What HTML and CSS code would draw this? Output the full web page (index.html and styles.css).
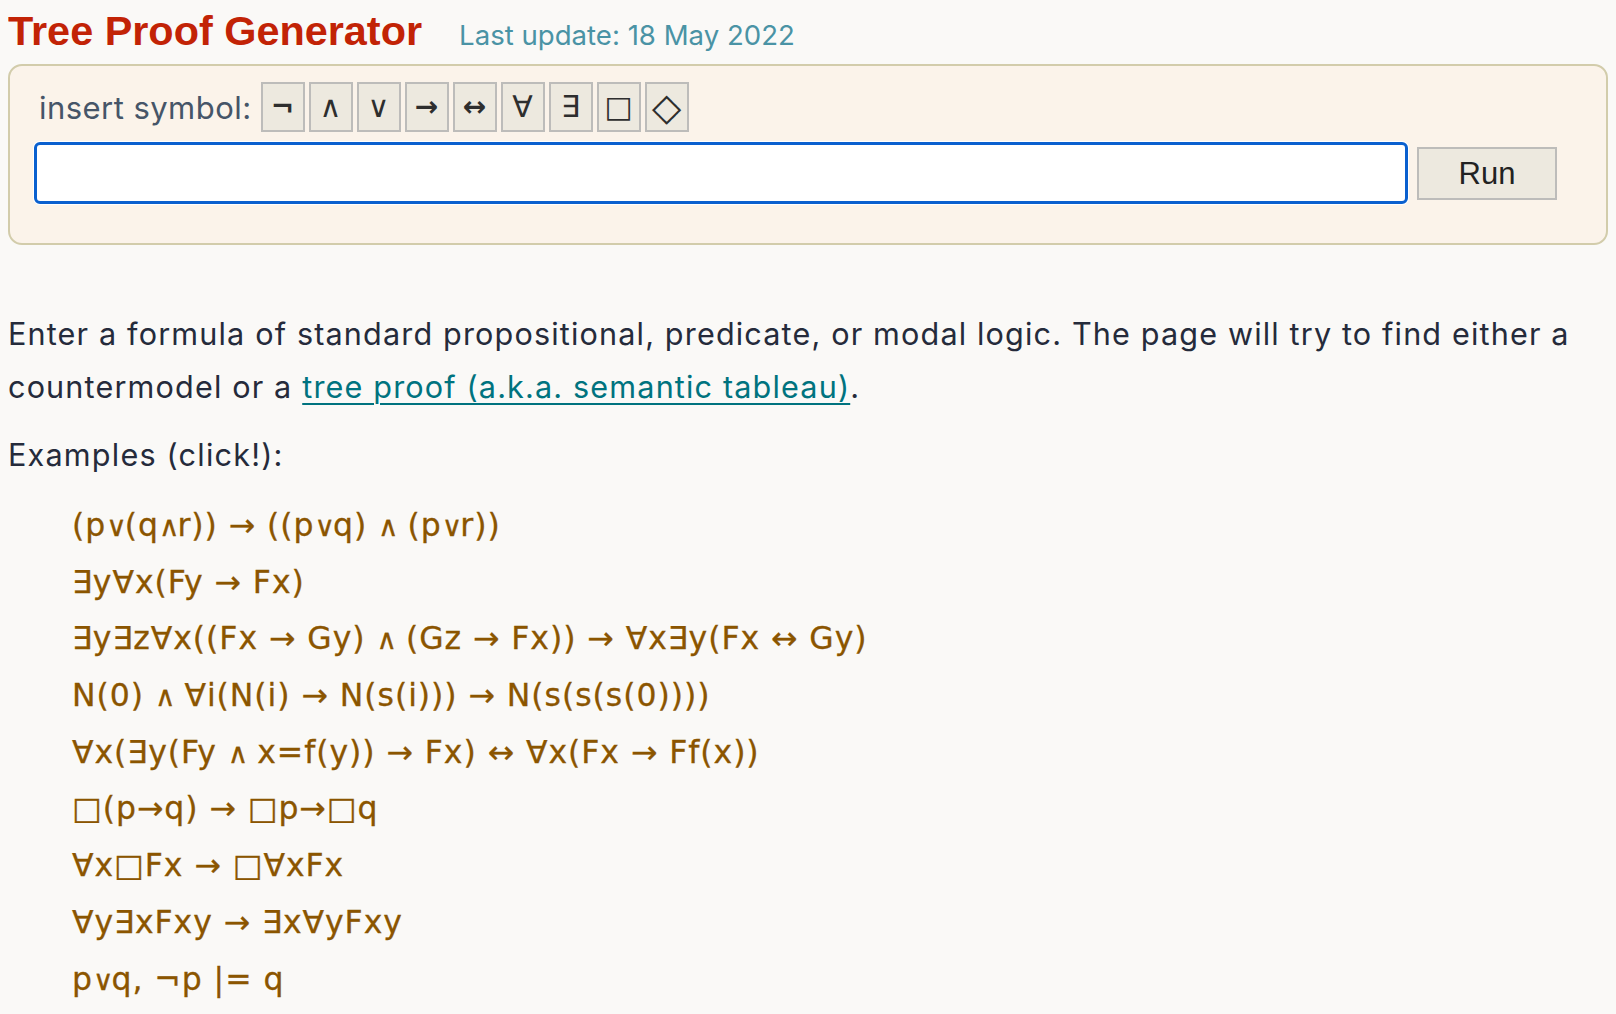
FILE: index.html
```html
<!DOCTYPE html>
<html lang="en">
<head>
<meta charset="utf-8">
<title>Tree Proof Generator</title>
<link rel="stylesheet" href="styles.css">
</head>
<body>
<header class="top">
  <h1 class="title">Tree Proof Generator</h1>
  <span class="updated">Last update: 18 May 2022</span>
</header>
<form class="panel">
  <div class="symbols">
    <span class="label">insert symbol:</span>
    <button type="button" class="sym sym-bold">¬</button>
    <button type="button" class="sym">∧</button>
    <button type="button" class="sym">∨</button>
    <button type="button" class="sym sym-bold">→</button>
    <button type="button" class="sym sym-bold">↔</button>
    <button type="button" class="sym">∀</button>
    <button type="button" class="sym">∃</button>
    <button type="button" class="sym sym-shape">□</button>
    <button type="button" class="sym sym-diamond">◇</button>
  </div>
  <div class="entry">
    <input class="formula" type="text" aria-label="formula">
    <button type="button" class="run">Run</button>
  </div>
</form>
<p class="intro">Enter a formula of standard propositional, predicate, or modal logic. The page will try to find either a countermodel or a <a href="#" class="link">tree proof (a.k.a. semantic tableau)</a>.</p>
<p class="ex-title">Examples (click!):</p>
<ul class="examples">
  <li>(p<span class="op">∨</span>(q<span class="op">∧</span>r)) → ((p<span class="op">∨</span>q) <span class="op">∧</span> (p<span class="op">∨</span>r))</li>
  <li>∃y∀x(Fy → Fx)</li>
  <li>∃y∃z∀x((Fx → Gy) <span class="op">∧</span> (Gz → Fx)) → ∀x∃y(Fx ↔ Gy)</li>
  <li>N(0) <span class="op">∧</span> ∀i(N(i) → N(s(i))) → N(s(s(s(0))))</li>
  <li>∀x(∃y(Fy <span class="op">∧</span> x=f(y)) → Fx) ↔ ∀x(Fx → Ff(x))</li>
  <li>□(p→q) → □p→□q</li>
  <li>∀x□Fx → □∀xFx</li>
  <li>∀y∃xFxy → ∃x∀yFxy</li>
  <li>p<span class="op">∨</span>q, ¬p |= q</li>
</ul>
</body>
</html>
```
FILE: styles.css
```css
html, body {
  background: #faf9f7;
}
body {
  margin: 8px;
  font-family: Inter, "Noto Sans", sans-serif;
  color: #252b3b;
}
.top {
  display: flex;
  align-items: baseline;
  gap: 37px;
}
.title {
  margin: 0;
  font-family: "Liberation Sans", Arial, sans-serif;
  font-weight: bold;
  font-size: 41.4px;
  line-height: 47px;
  color: #c22306;
}
.updated {
  font-family: Inter, sans-serif;
  font-size: 27.6px;
  color: #4a93a5;
}
.panel {
  margin-top: 9px;
  background: #fbf3ea;
  border: 2px solid #d2ccab;
  border-radius: 14px;
  padding: 16px 24px 39px 24px;
}
.symbols {
  display: flex;
  align-items: center;
  gap: 4px;
}
.label {
  margin-left: 5px;
  margin-right: 5px;
  font-size: 31px;
  letter-spacing: 0.45px;
  color: #465568;
}
.sym {
  width: 44px;
  height: 50px;
  padding: 0;
  margin: 0;
  background: #ede9df;
  border: 2px solid #bdbcba;
  border-radius: 0;
  color: #2e2e2e;
  font-family: "DejaVu Sans", sans-serif;
  font-size: 30px;
  line-height: 1;
}
.sym-bold {
  font-weight: bold;
  font-size: 28px;
}
.sym-shape {
  font-size: 30px;
}
.sym-diamond {
  font-size: 38px;
}
.entry {
  display: flex;
  align-items: center;
  gap: 9px;
  margin-top: 10px;
}
.formula {
  width: 1374px;
  height: 62px;
  box-sizing: border-box;
  margin: 0;
  border: 3px solid #0a60cf;
  border-radius: 6px;
  background: #fff;
  box-shadow: 0 0 0 1px #fff;
  outline: none;
  font-size: 28px;
  padding: 0 10px;
}
.run {
  width: 140px;
  height: 53px;
  margin: 0;
  background: #ede9df;
  border: 2px solid #bdbcba;
  border-radius: 0;
  color: #222;
  font-family: "Liberation Sans", Arial, sans-serif;
  font-size: 31px;
  padding-top: 2px;
}
.intro {
  margin: 62px 0 0 0;
  font-size: 30.6px;
  letter-spacing: 1.15px;
  line-height: 53px;
}
.link {
  color: #00737f;
  text-decoration: underline;
  text-underline-offset: 5px;
  text-decoration-thickness: 2px;
}
.ex-title {
  margin: 15px 0 0 0;
  font-size: 30.6px;
  letter-spacing: 1.2px;
  line-height: 53px;
}
.examples {
  list-style: none;
  margin: 16px 0 0 0;
  padding: 0 0 0 64px;
  font-family: "DejaVu Sans", sans-serif;
  font-size: 31.5px;
  letter-spacing: 0.95px;
  line-height: 56.7px;
  color: #8b5500;
  -webkit-text-stroke: 0.3px #8b5500;
}
.examples li {
  height: 56.7px;
  cursor: pointer;
}
.op {
  font-size: 28px;
  line-height: 1;
  letter-spacing: -2px;
}
```
